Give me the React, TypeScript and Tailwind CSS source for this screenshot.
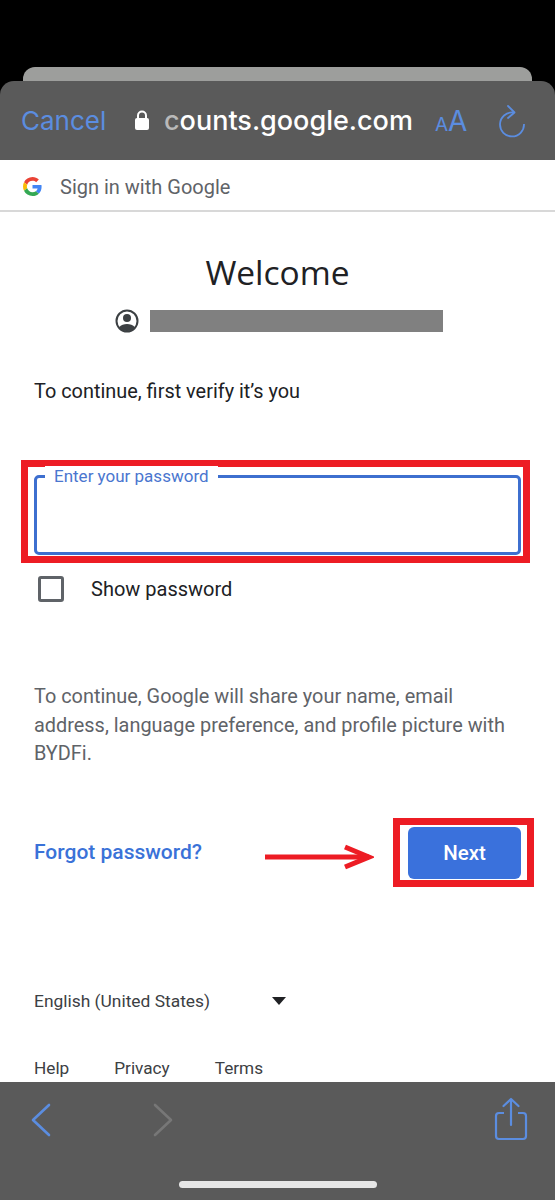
function GoogleLogo() {
  return (
    <svg width="19" height="19" viewBox="0 0 48 48">
      <path fill="#EA4335" d="M24 9.5c3.54 0 6.71 1.22 9.21 3.6l6.85-6.85C35.9 2.38 30.47 0 24 0 14.62 0 6.51 5.38 2.56 13.22l7.98 6.19C12.43 13.72 17.74 9.5 24 9.5z" />
      <path fill="#4285F4" d="M46.98 24.55c0-1.57-.15-3.09-.38-4.55H24v9.02h12.94c-.58 2.96-2.26 5.48-4.78 7.18l7.73 6c4.51-4.18 7.09-10.36 7.09-17.65z" />
      <path fill="#FBBC05" d="M10.53 28.59c-.48-1.45-.76-2.99-.76-4.59s.27-3.14.76-4.59l-7.98-6.19C.92 16.46 0 20.12 0 24c0 3.88.92 7.54 2.56 10.78l7.97-6.19z" />
      <path fill="#34A853" d="M24 48c6.48 0 11.93-2.13 15.89-5.81l-7.73-6c-2.15 1.45-4.92 2.3-8.16 2.3-6.26 0-11.57-4.22-13.47-9.91l-7.98 6.19C6.51 42.62 14.62 48 24 48z" />
    </svg>
  )
}

function TopBar() {
  return (
    <div className="flex h-[79px] shrink-0 items-center rounded-t-[14px] bg-[#5a5a5a] pl-[21px] font-['Inter',sans-serif]">
      <span className="w-[113px] text-[26px] text-[#5b8de0]">Cancel</span>
      <svg width="16" height="22" viewBox="0 0 16 22" className="mb-[1px]">
        <path d="M4 10V6.5a4 4 0 0 1 8 0V10" fill="none" stroke="#fff" strokeWidth="2" />
        <rect x="1" y="9" width="14" height="12" rx="2" fill="#fff" />
      </svg>
      <span className="ml-[14px] w-[250px] text-[27px] leading-none font-medium whitespace-nowrap text-white">
        <span className="text-[#b9b9b9]">c</span>ounts.google.com
      </span>
      <span className="ml-[21px] flex w-[36px] items-baseline text-[#5b8de0]">
        <span className="text-[19px]">A</span>
        <span className="text-[28px]">A</span>
      </span>
      <svg width="28" height="34" viewBox="0 0 28 34" fill="none" stroke="#5b8de0" strokeWidth="1.8" className="mt-[2px] ml-[27px]">
        <path d="M15 7.500A12 12 0 1 0 26 19" />
        <path d="M10 1l6.500 6.500L10 13" strokeLinecap="round" strokeLinejoin="round" />
      </svg>
    </div>
  )
}

function BottomBar() {
  return (
    <div className="relative h-[118px] shrink-0 bg-[#5a5a5a]">
      <div className="flex items-start pt-[15px] pr-[27px] pl-[31px]">
        <svg width="20" height="34" viewBox="0 0 20 34" fill="none" stroke="#5b8de0" strokeWidth="2.6" strokeLinecap="round" strokeLinejoin="round" className="mt-[6px]">
          <path d="M18 2 2 17l16 15" />
        </svg>
        <svg width="20" height="34" viewBox="0 0 20 34" fill="none" stroke="#777777" strokeWidth="2.6" strokeLinecap="round" strokeLinejoin="round" className="mt-[6px] ml-[102px]">
          <path d="M2 2l16 15L2 32" />
        </svg>
        <svg width="34" height="44" viewBox="0 0 34 44" fill="none" stroke="#5b8de0" strokeWidth="2.2" className="ml-auto">
          <path d="M10 16H5a3 3 0 0 0-3 3v20a3 3 0 0 0 3 3h24a3 3 0 0 0 3-3V19a3 3 0 0 0-3-3h-5" />
          <path d="M17 28V2M9.500 9 17 2l7.500 7" strokeLinecap="round" strokeLinejoin="round" />
        </svg>
      </div>
      <div className="absolute bottom-[12px] left-[179px] h-[7px] w-[198px] rounded-full bg-[#e6e6e6]" />
    </div>
  )
}

export default function App() {
  return (
    <div className="flex h-[1200px] w-[555px] flex-col overflow-hidden bg-black pt-[67px] font-['Roboto',sans-serif]">
      <div className="mx-[23px] h-[14px] shrink-0 rounded-t-[12px] bg-[#9d9e9c]" />
      <TopBar />

      <main className="min-h-0 flex-1 overflow-hidden bg-white">
        {/* Header */}
        <div className="flex h-[52px] items-center gap-[18px] border-b-2 border-[#d8d8d8] pt-[3px] pl-[23px] text-[20px] text-[#5f6368]">
          <GoogleLogo />
          <span>Sign in with Google</span>
        </div>

        <h1 className="mt-[38px] text-center font-['Open_Sans',sans-serif] text-[33.500px] leading-[44px] text-[#202124]">Welcome</h1>
        <div className="mt-[15px] flex h-[24px] items-center pl-[115px]">
          <svg width="24" height="24" viewBox="0 0 24 24">
            <circle cx="12" cy="12" r="10.500" fill="none" stroke="#3c4043" strokeWidth="2" />
            <circle cx="12" cy="9" r="4" fill="#3c4043" />
            <path d="M4 18.500C6 15.500 9 15 12 15s6 .5 8 3.500A10 10 0 0 1 12 22a10 10 0 0 1-8-3.500z" fill="#3c4043" />
          </svg>
          <div className="ml-[11px] h-[22px] w-[293px] bg-[#808080]" />
        </div>

        <p className="mt-[45px] pl-[34px] text-[19.900px] leading-[28px] text-[#202124]">To continue, first verify it’s you</p>

        {/* Password field with red annotation */}
        <div className="mt-[54px] ml-[21px] h-[103px] w-[509px] border-[7px] border-[#ed1c24] pt-[8px] pr-[2px] pb-[1px] pl-[6px]">
          <div className="relative h-full rounded-[5px] border-[3px] border-[#3d6fcf]">
            <span className="absolute top-[-12px] left-[8px] bg-white px-[9px] text-[17px] leading-[20px] text-[#4a76cf]">Enter your password</span>
          </div>
        </div>

        <label className="mt-[12px] ml-[38px] flex h-[27px] items-center gap-[27px] text-[20px] text-[#202124]">
          <span className="h-[26px] w-[26px] rounded-[3px] border-[3px] border-[#5f6368]" />
          Show password
        </label>

        <p className="mt-[81px] w-[520px] pl-[34px] text-[19.900px] leading-[28.500px] text-[#5f6368]">
          To continue, Google will share your name, email address, language preference, and profile picture with BYDFi.
        </p>

        {/* Actions */}
        <div className="mt-[49.500px] flex h-[69px] items-center pl-[34px]">
          <span className="w-[231px] text-[21px] font-medium text-[#3a72d8]">Forgot password?</span>
          <svg width="109" height="28" viewBox="0 0 109 28" fill="none" stroke="#ed1c24" className="mt-[8px]">
            <path d="M0 14h104" strokeWidth="5" />
            <path d="M80 4l24 10-24 10" strokeWidth="5" />
          </svg>
          <div className="ml-[19px] h-[69px] w-[141px] border-[7px] border-[#ed1c24] pt-[2px] pl-[8px]">
            <button className="flex h-[52px] w-[113px] items-center justify-center rounded-[6px] bg-[#3a71dc] text-[20.500px] font-medium text-white">Next</button>
          </div>
        </div>

        {/* Footer */}
        <div className="mt-[101px] flex items-center pl-[34px] text-[17.400px] text-[#3c4043]">
          <span className="w-[238px]">English (United States)</span>
          <span className="h-0 w-0 border-x-[7.500px] border-t-[8px] border-x-transparent border-t-[#202124]" />
        </div>
        <div className="mt-[42px] flex gap-[45px] pl-[34px] text-[17.200px] text-[#3c4043]">
          <span>Help</span>
          <span>Privacy</span>
          <span>Terms</span>
        </div>
      </main>

      <BottomBar />
    </div>
  )
}
